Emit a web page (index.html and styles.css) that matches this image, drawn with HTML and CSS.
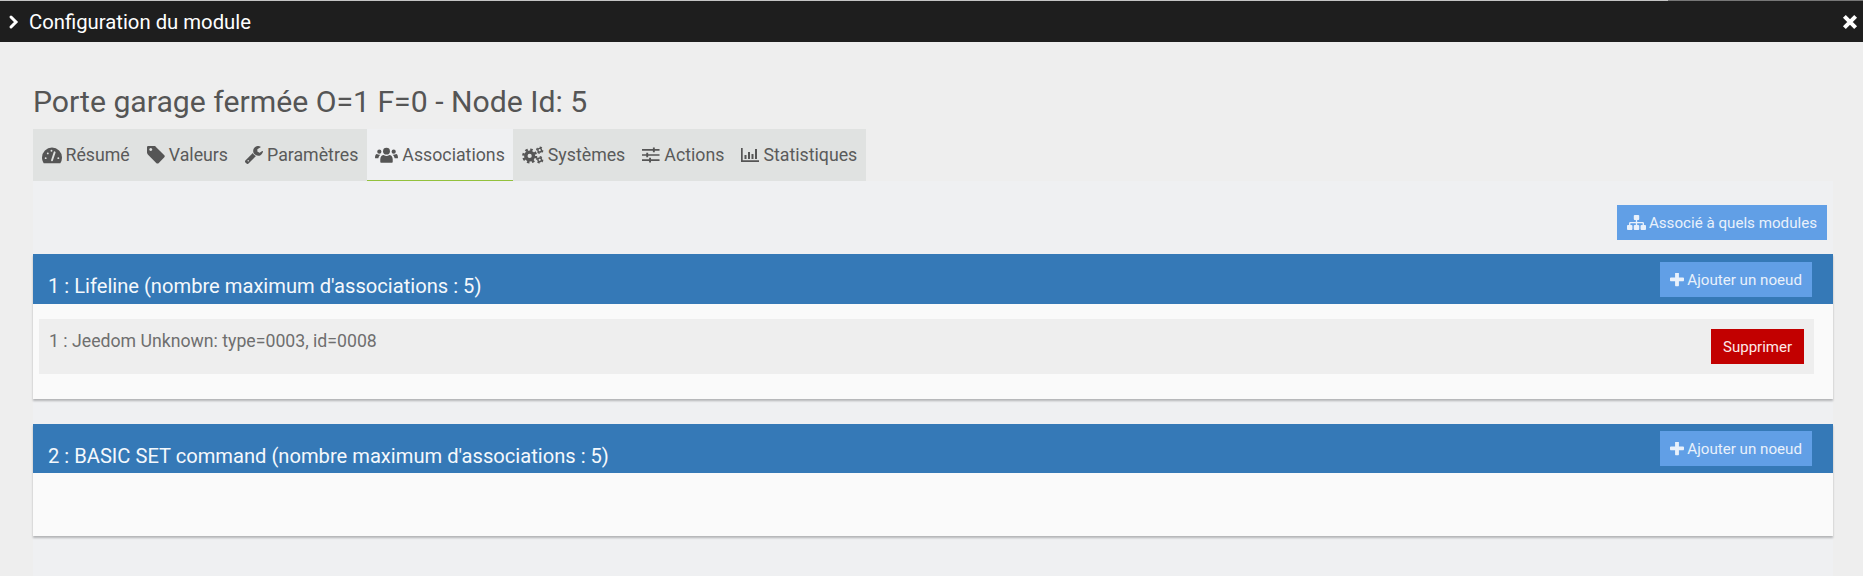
FILE: index.html
```html
<!DOCTYPE html>
<html lang="fr">
<head>
<meta charset="utf-8">
<title>Configuration du module</title>
<link rel="stylesheet" href="styles.css">
</head>
<body>
<div class="dialog">
  <div class="topline"></div>
  <header class="titlebar">
    <svg class="tb-icon chevron" viewBox="0 0 12 16"><path d="M3 3l5 5-5 5"/></svg>
    <span class="tb-title">Configuration du module</span>
    <svg class="tb-icon close" viewBox="0 0 16 16"><path d="M3 3l10 10M13 3L3 13"/></svg>
  </header>
  <main class="content">
    <h1 class="node-title">Porte garage fermée O=1 F=0 - Node Id: 5</h1>
    <nav class="tabs">
      <a class="tab">
        <svg class="ico gauge" viewBox="0.500 1.500 19 15"><path class="fill" d="M10 1.500a9.500 9.500 0 0 0-9.500 9.500c0 2 .6 3.800 1.600 5.300h15.800a9.500 9.500 0 0 0 1.600-5.300A9.500 9.500 0 0 0 10 1.500z"/><path class="cut" d="M10 13.500L12.500 6M4 11.500h.01M16 11.500h.01M6 7h.01M9.500 4.500h.01"/></svg>
        Résumé</a>
      <a class="tab">
        <svg class="ico" viewBox="128 192 1536 1440"><path class="fill" d="M576 448q0-53-37.500-90.500t-90.500-37.500-90.500 37.500-37.500 90.500 37.500 90.500 90.500 37.500 90.500-37.500 37.500-90.500zm1067 576q0 53-37 90l-491 492q-39 37-91 37-53 0-90-37l-715-716q-38-37-64.500-101t-26.500-117v-416q0-52 38-90t90-38h416q53 0 117 26.500t102 64.500l715 714q37 39 37 91z"/></svg>
        Valeurs</a>
      <a class="tab">
        <svg class="ico" viewBox="90 140 1640 1620"><path class="fill" d="M448 1472q0-26-19-45t-45-19-45 19-19 45 19 45 45 19 45-19 19-45zm644-420l-682 682q-37 37-90 37-52 0-91-37l-106-108q-38-36-38-90 0-53 38-91l681-681q39 98 114.500 173.500t173.500 114.500zm634-435q0 39-23 106-47 134-164.500 217.500t-258.500 83.500q-185 0-316.500-131.500t-131.500-316.500 131.500-316.500 316.500-131.500q58 0 121.500 16.500t107.500 46.500q16 11 16 28t-16 28l-293 169v224l193 107q5-3 79-48.500t135.500-81 70.500-35.500q15 0 23.500 10t8.500 25z"/></svg>
        Paramètres</a>
      <a class="tab active">
        <svg class="ico users" viewBox="0 0 24 18"><g class="fill"><circle cx="12" cy="5" r="3.600"/><circle cx="4.500" cy="5.500" r="2.200"/><circle cx="19.500" cy="5.500" r="2.200"/><path d="M5.500 16v-2.500c0-3 2-4.500 3.500-4.500 1 .7 2 1 3 1s2-.3 3-1c1.500 0 3.500 1.500 3.500 4.500V16c0 .6-.5 1-1 1h-11c-.5 0-1-.4-1-1zM0 12c0-2.500.8-4 2-4 .8.500 2 1 3.500.7-.9.900-1.700 1.800-2 3.800H1c-.6 0-1-.2-1-.5zM24 12c0-2.500-.8-4-2-4-.8.500-2 1-3.500.7.900.900 1.700 1.800 2 3.800H23c.6 0 1-.2 1-.5z"/></g></svg>
        Associations</a>
      <a class="tab">
        <svg class="ico gears" viewBox="0 0 23 18"><circle class="gear-ring" cx="8" cy="10" r="4"/><circle class="gear-teeth" cx="8" cy="10" r="6.600" pathLength="32"/><circle class="gear-ring-s" cx="18.500" cy="4" r="1.900"/><circle class="gear-teeth-s" cx="18.500" cy="4" r="3.100" pathLength="32"/><circle class="gear-ring-s" cx="18.500" cy="14" r="1.900"/><circle class="gear-teeth-s" cx="18.500" cy="14" r="3.100" pathLength="32"/></svg>
        Systèmes</a>
      <a class="tab">
        <svg class="ico" viewBox="0 0 19 18"><path class="bars" d="M0 3.500h18.500M0 9h18.500M0 14.500h18.500"/><path class="fill" d="M11.500 1h2v5h-2zM4.500 6.500h2v5h-2zM7.500 12h2v5h-2z"/></svg>
        Actions</a>
      <a class="tab">
        <svg class="ico" viewBox="0 0 18 18"><path class="fill" d="M0 2h1.700v12.300H18V16H0z"/><path class="fill" d="M3.500 9h2v4h-2zM7 6h2v7H7zM10.500 8h2v5h-2zM14 3h2v10h-2z"/></svg>
        Statistiques</a>
    </nav>
    <section class="pane">
      <div class="pane-actions">
        <button class="btn btn-blue">
          <svg class="btn-ico sitemap" viewBox="0 128 1792 1536" preserveAspectRatio="none"><path d="M1792 1248v320q0 40-28 68t-68 28h-320q-40 0-68-28t-28-68v-320q0-40 28-68t68-28h96v-192h-512v192h96q40 0 68 28t28 68v320q0 40-28 68t-68 28h-320q-40 0-68-28t-28-68v-320q0-40 28-68t68-28h96v-192h-512v192h96q40 0 68 28t28 68v320q0 40-28 68t-68 28h-320q-40 0-68-28t-28-68v-320q0-40 28-68t68-28h96v-192q0-52 38-90t90-38h512v-192h-96q-40 0-68-28t-28-68v-320q0-40 28-68t68-28h320q40 0 68 28t28 68v320q0 40-28 68t-68 28h-96v192h512q52 0 90 38t38 90v192h96q40 0 68 28t28 68z"/></svg>
          Associé à quels modules</button>
      </div>
      <article class="panel panel-first">
        <div class="panel-head">
          <h3 class="panel-title">1 : Lifeline (nombre maximum d'associations : 5)</h3>
          <button class="btn btn-blue">
            <svg class="btn-ico plus" viewBox="192 192 1408 1408"><path d="M1600 736v192q0 40-28 68t-68 28h-416v416q0 40-28 68t-68 28h-192q-40 0-68-28t-28-68v-416h-416q-40 0-68-28t-28-68v-192q0-40 28-68t68-28h416v-416q0-40 28-68t68-28h192q40 0 68 28t28 68v416h416q40 0 68 28t28 68z"/></svg>
            Ajouter un noeud</button>
        </div>
        <div class="panel-body">
          <div class="item">
            <span class="item-label">1 : Jeedom Unknown: type=0003, id=0008</span>
            <button class="btn btn-red">Supprimer</button>
          </div>
        </div>
      </article>
      <article class="panel panel-second">
        <div class="panel-head">
          <h3 class="panel-title">2 : BASIC SET command (nombre maximum d'associations : 5)</h3>
          <button class="btn btn-blue">
            <svg class="btn-ico plus" viewBox="192 192 1408 1408"><path d="M1600 736v192q0 40-28 68t-68 28h-416v416q0 40-28 68t-68 28h-192q-40 0-68-28t-28-68v-416h-416q-40 0-68-28t-28-68v-192q0-40 28-68t68-28h416v-416q0-40 28-68t68-28h192q40 0 68 28t28 68v416h416q40 0 68 28t28 68z"/></svg>
            Ajouter un noeud</button>
        </div>
        <div class="panel-body empty"></div>
      </article>
    </section>
  </main>
</div>
</body>
</html>
```
FILE: styles.css
```css
* { box-sizing: border-box; }
html, body { margin: 0; height: 100%; overflow: hidden; }
body { background: #eeeeee; font-family: Roboto, "Liberation Sans", sans-serif; color: #555; }
.dialog { height: 576px; display: flex; flex-direction: column; }
.topline { height: 1px; flex: none; background: linear-gradient(90deg, #c4c4c4 1668px, #777 1668px); }
.titlebar { height: 41px; flex: none; background: #1e1e1e; color: #fff; display: flex; align-items: center; padding: 0 8px; }
.tb-icon { fill: none; stroke: #fff; stroke-linecap: round; }
.chevron { width: 12px; height: 16px; stroke-width: 3; margin-right: 9px; }
.close { width: 18px; height: 18px; stroke-width: 3.600; margin-left: auto; margin-right: -4px; stroke-linecap: butt; }
.tb-title { font-size: 20.300px; }
.content { flex: 1; padding: 0 30px 0 33px; display: flex; flex-direction: column; min-height: 0; }
.node-title { margin: 41px 0 0; font-size: 30.200px; line-height: 38px; height: 46px; font-weight: 400; color: #555; }
.tabs { display: flex; align-self: flex-start; height: 52px; background: #e0e2e1; border-bottom: 1px solid #e0e2e1; }
.tab { display: flex; align-items: center; gap: 4px; padding: 1px 8.500px 0; font-size: 17.750px; color: #5a5a5a; white-space: nowrap; }
.tab.active { background: #eff0f2; border-bottom: 1px solid #93c13d; margin-bottom: -1px; }
.ico { width: 18px; height: 18px; flex: none; }
.ico.gauge { width: 20px; height: 17px; }
.ico.users { width: 23px; }
.ico.gears { width: 22px; }
.fill { fill: #555; }
.cut { fill: none; stroke: #e0e2e1; stroke-width: 1.800; stroke-linecap: round; }
.bars { fill: none; stroke: #555; stroke-width: 1.800; }
.gear-ring { fill: none; stroke: #555; stroke-width: 3.600; }
.gear-teeth { fill: none; stroke: #555; stroke-width: 2.600; stroke-dasharray: 2 2; }
.gear-ring-s { fill: none; stroke: #555; stroke-width: 1.500; }
.gear-teeth-s { fill: none; stroke: #555; stroke-width: 1.500; stroke-dasharray: 4 4; }
.pane { flex: 1; background: #eff0f2; min-height: 0; }
.pane-actions { display: flex; justify-content: flex-end; padding: 24px 6px 0 0; height: 73px; }
.btn { border: 0; height: 35px; padding: 0 10px; font: 400 15.150px Roboto, "Liberation Sans", sans-serif; display: inline-flex; align-items: center; gap: 3px; white-space: nowrap; }
.btn-blue { background: #619fe6; color: #e9f1fb; }
.btn-red { background: #c20000; color: #fde8e8; padding: 0 12px; font-size: 15px; }
.btn-ico { fill: #e9f1fb; flex: none; }
.sitemap { width: 19px; height: 15px; }
.plus { width: 14px; height: 14px; }
.panel { background: #fafafa; box-shadow: 0 2px 2px rgba(0,0,0,.25); }
.panel-head { background: #3579b7; display: flex; justify-content: space-between; align-items: flex-start; padding: 8px 21px 0 15px; height: 50px; }
.panel-title { margin: 11px 0 0; font-size: 20.150px; line-height: 26px; font-weight: 400; color: #f4f8fc; white-space: nowrap; }
.panel-first { height: 145px; margin-bottom: 25px; }
.panel-second { height: 112px; }
.panel-second .panel-head { height: 49px; padding-top: 7px; }
.panel-second .panel-title { margin-top: 12px; }
.panel-body { padding: 15px 19px 0 6px; }
.item { background: #eeeeee; height: 55px; display: flex; justify-content: space-between; align-items: flex-start; padding: 10px 10px 0 10px; }
.item-label { font-size: 17.700px; line-height: 24px; color: #6f6f6f; }
```
